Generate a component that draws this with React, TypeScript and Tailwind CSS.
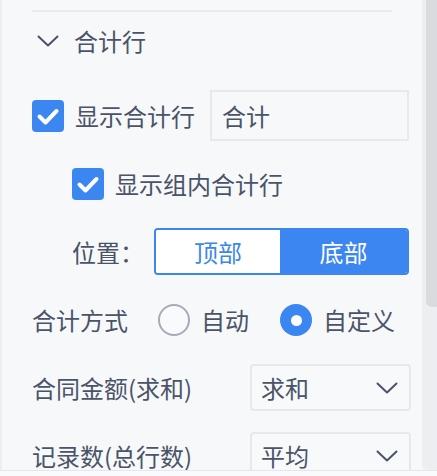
const font = { fontFamily: '"Noto Sans CJK SC", "Noto Sans", sans-serif' };

function Chevron({ className }: { className?: string }) {
  return (
    <svg className={className} width="22" height="12" viewBox="0 0 22 12" fill="none">
      <polyline points="1.5,1.5 11,10.5 20.5,1.5" stroke="currentColor" strokeWidth="2" strokeLinecap="round" strokeLinejoin="round" />
    </svg>
  );
}

function Checkbox() {
  return (
    <div className="w-[32px] h-[32px] rounded-[4px] bg-[#3b86f1] flex items-center justify-center shrink-0">
      <svg width="32" height="32" viewBox="0 0 32 32" fill="none">
        <polyline points="7.5,16.5 13.5,22.5 24.5,11" stroke="white" strokeWidth="4" strokeLinecap="round" strokeLinejoin="round" />
      </svg>
    </div>
  );
}

function Select({ value }: { value: string }) {
  return (
    <div className="ml-auto w-[161px] h-[47px] shrink-0 border-2 border-[#e7e8eb] rounded-[4px] bg-[#f8f9fb] flex items-center pl-[9px] pr-[11px]">
      <span>{value}</span>
      <Chevron className="ml-auto text-[#4a5468]" />
    </div>
  );
}

export default function App() {
  return (
    <div className="w-[437px] h-[476px] bg-[#f7f8fa] flex flex-col overflow-hidden text-[24px] leading-none text-[#4a5468]" style={font}>
      <div className="h-[470px] flex overflow-hidden">
        <div className="flex-1 border-l-2 border-[#eceef1] pl-[30px] pr-[11px] pt-[10px]">
          <div className="h-[2px] bg-[#e9eaed] mr-[19px]" />

          <div className="h-[58px] flex items-center">
            <Chevron className="ml-[5px] text-[#4a5468]" />
            <span className="ml-[15px]">合计行</span>
          </div>

          <div className="mt-[20px] h-[51px] flex items-center pr-[2px]">
            <Checkbox />
            <span className="ml-[11px]">显示合计行</span>
            <div className="ml-auto w-[199px] h-[51px] border-2 border-[#e8e9ec] flex items-center pl-[10px]">合计</div>
          </div>

          <div className="mt-[19px] h-[48px] flex items-center pl-[40px]">
            <Checkbox />
            <span className="ml-[11px]">显示组内合计行</span>
          </div>

          <div className="mt-[20px] h-[47px] flex items-center pl-[40px] pr-[2px]">
            <span>位置：</span>
            <div className="ml-auto w-[255px] h-[47px] border-2 border-[#3b86f1] rounded-[4px] flex overflow-hidden">
              <div className="w-[124px] bg-white text-[#3b86f1] flex items-center justify-center">顶部</div>
              <div className="flex-1 bg-[#3b86f1] text-white flex items-center justify-center">底部</div>
            </div>
          </div>

          <div className="mt-[21px] h-[48px] flex items-center">
            <span>合计方式</span>
            <div className="ml-[30px] w-[32px] h-[32px] rounded-full border-2 border-[#a6abb5] bg-[#f9fafb] shrink-0" />
            <span className="ml-[11px]">自动</span>
            <div className="ml-[31px] w-[32px] h-[32px] rounded-full bg-[#3b86f1] flex items-center justify-center shrink-0">
              <div className="w-[11px] h-[11px] rounded-full bg-white" />
            </div>
            <span className="ml-[11px]">自定义</span>
          </div>

          <div className="mt-[20px] h-[47px] flex items-center">
            <span>合同金额(求和)</span>
            <Select value="求和" />
          </div>

          <div className="mt-[21px] h-[47px] flex items-center">
            <span>记录数(总行数)</span>
            <Select value="平均" />
          </div>
        </div>

        <div className="w-[15px] bg-[#eceef1] rounded-bl-[6px] pl-[4px]">
          <div className="h-[307px] bg-[#d9dbdf] rounded-bl-[6px]" />
        </div>
      </div>
      <div className="flex-1 border-t border-[#e4e6e9] bg-[#f9fafb]" />
    </div>
  );
}
